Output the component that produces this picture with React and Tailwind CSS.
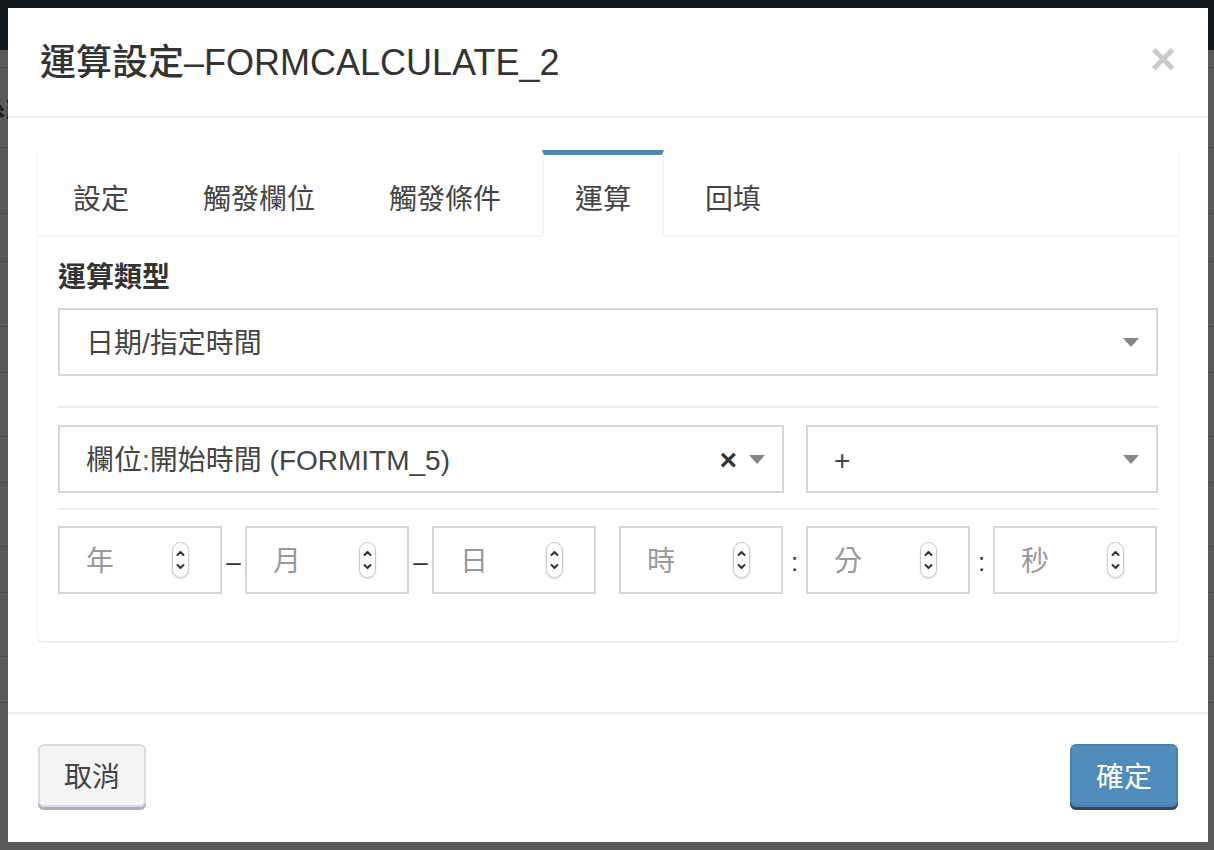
const FONT = "font-['Liberation_Sans','Noto_Sans_CJK_TC',sans-serif]";

const TABS = ['設定', '觸發欄位', '觸發條件', '運算', '回填'];

function Caret() {
  return (
    <span className="block w-0 h-0 border-l-[8px] border-r-[8px] border-t-[9px] border-l-transparent border-r-transparent border-t-[#888]" />
  );
}

function Select({ value, clearable }) {
  return (
    <div className="h-[68px] border-2 border-[#d2d6de] bg-white flex items-center pl-[26px] pr-[17px]">
      <span className="flex-1 text-[28px] text-[#444] leading-none pt-[4px]">{value}</span>
      {clearable && (
        <span className="text-[30px] font-bold text-[#333] leading-none mr-[12px] mt-[2px]">×</span>
      )}
      <Caret />
    </div>
  );
}

function Spinner() {
  return (
    <span className="w-[17px] h-[36px] rounded-full border border-[#c8c8c8] bg-white shadow-[0_1px_2px_rgba(0,0,0,0.15)] flex items-center justify-center">
      <svg width="11" height="26" viewBox="0 0 11 26" fill="none" stroke="#333" strokeWidth="2" strokeLinecap="round" strokeLinejoin="round">
        <polyline points="2.5 8 5.5 5 8.5 8" />
        <polyline points="2.5 18 5.5 21 8.5 18" />
      </svg>
    </span>
  );
}

function NumField({ placeholder }) {
  return (
    <div className="w-[164px] h-[68px] shrink-0 border-2 border-[#d2d6de] bg-white flex items-center pl-[26px] pr-[31px]">
      <span className="flex-1 text-[28px] text-[#999] leading-none pt-[4px]">{placeholder}</span>
      <Spinner />
    </div>
  );
}

function Sep({ ch }) {
  return (
    <div className="w-[23px] shrink-0 flex items-center justify-center text-[26px] text-[#333] leading-none pt-[3px]">
      {ch}
    </div>
  );
}

export default function App() {
  return (
    <div className={`relative w-[1214px] h-[850px] overflow-hidden bg-[#595959] ${FONT}`}>
      {/* page behind the backdrop */}
      <div className="h-[50px] bg-[#131a1e]" />
      <div className="h-[18px] border-b border-[#4b4b4b]" />
      <div className="h-[80px] border-b border-[#4b4b4b] flex items-center">
        <span className="ml-[-22px] text-[28px] font-bold text-[#1c1c1c]">系綱</span>
      </div>
      {[66, 48, 65, 46, 64, 46, 64, 46, 64, 46].map((h, i) => (
        <div key={i} style={{ height: h }} className="border-b border-[#4b4b4b]" />
      ))}

      {/* modal */}
      <div className="absolute inset-0 p-2">
        <div className="w-[1200px] h-[834px] bg-white flex flex-col">
          {/* header */}
          <div className="h-[110px] shrink-0 border-b-2 border-[#f0f0f0] flex items-center justify-between px-[32px]">
            <h4 className="text-[36px] font-medium text-[#333] leading-none pt-[2px]">運算設定–FORMCALCULATE_2</h4>
            <span className="text-[44px] font-bold text-[#c9c9c9] leading-none mt-[-6px]">×</span>
          </div>

          {/* body */}
          <div className="flex-1 px-[30px] pt-[32px]">
            <div className="bg-white rounded-[4px] shadow-[0_1px_2px_rgba(0,0,0,0.12),0_0_1px_rgba(0,0,0,0.08)]">
              <div className="flex gap-[8px] pl-[2px] border-b-2 border-[#f4f4f4]">
                {TABS.map(t => {
                  const active = t === '運算';
                  return (
                    <div
                      key={t}
                      className={`h-[85px] mb-[-2px] px-[31px] pt-[9px] border-t-[5px] border-x-2 flex items-center text-[28px] leading-none text-[#444] ${
                        active ? 'border-t-[#4f88b5] border-x-[#f4f4f4] bg-white h-[87px] border-b-2 border-b-white' : 'border-transparent'
                      }`}
                    >
                      {t}
                    </div>
                  );
                })}
              </div>

              <div className="px-[20px] pt-[21px] pb-[47px]">
                <div className="text-[28px] leading-[40px] font-bold text-[#333] mb-[10px]">運算類型</div>
                <Select value="日期/指定時間" />

                <div className="h-[2px] bg-[#eeeeee] mt-[30px]" />

                <div className="grid grid-cols-[726px_1fr] gap-[22px] mt-[17px]">
                  <Select value="欄位:開始時間 (FORMITM_5)" clearable />
                  <Select value="+" />
                </div>

                <div className="h-[2px] bg-[#eeeeee] mt-[15px]" />

                <div className="flex mt-[16px]">
                  <NumField placeholder="年" />
                  <Sep ch="–" />
                  <NumField placeholder="月" />
                  <Sep ch="–" />
                  <NumField placeholder="日" />
                  <Sep ch="" />
                  <NumField placeholder="時" />
                  <Sep ch=":" />
                  <NumField placeholder="分" />
                  <Sep ch=":" />
                  <NumField placeholder="秒" />
                </div>
              </div>
            </div>
          </div>

          {/* footer */}
          <div className="h-[130px] shrink-0 border-t-2 border-[#f0f0f0] px-[30px] pt-[30px] flex justify-between items-start">
            <button className="h-[63px] px-[24px] pt-[5px] rounded-[6px] border-2 border-[#dddddd] bg-[#f4f4f4] text-[28px] text-[#444] leading-none shadow-[0_3px_0_#a9aec4]">
              取消
            </button>
            <button className="h-[63px] px-[24px] pt-[5px] rounded-[6px] border-2 border-[#4a82ad] bg-[#508cbb] text-[28px] text-white leading-none shadow-[0_3px_0_#3a4158]">
              確定
            </button>
          </div>
        </div>
      </div>
    </div>
  );
}
